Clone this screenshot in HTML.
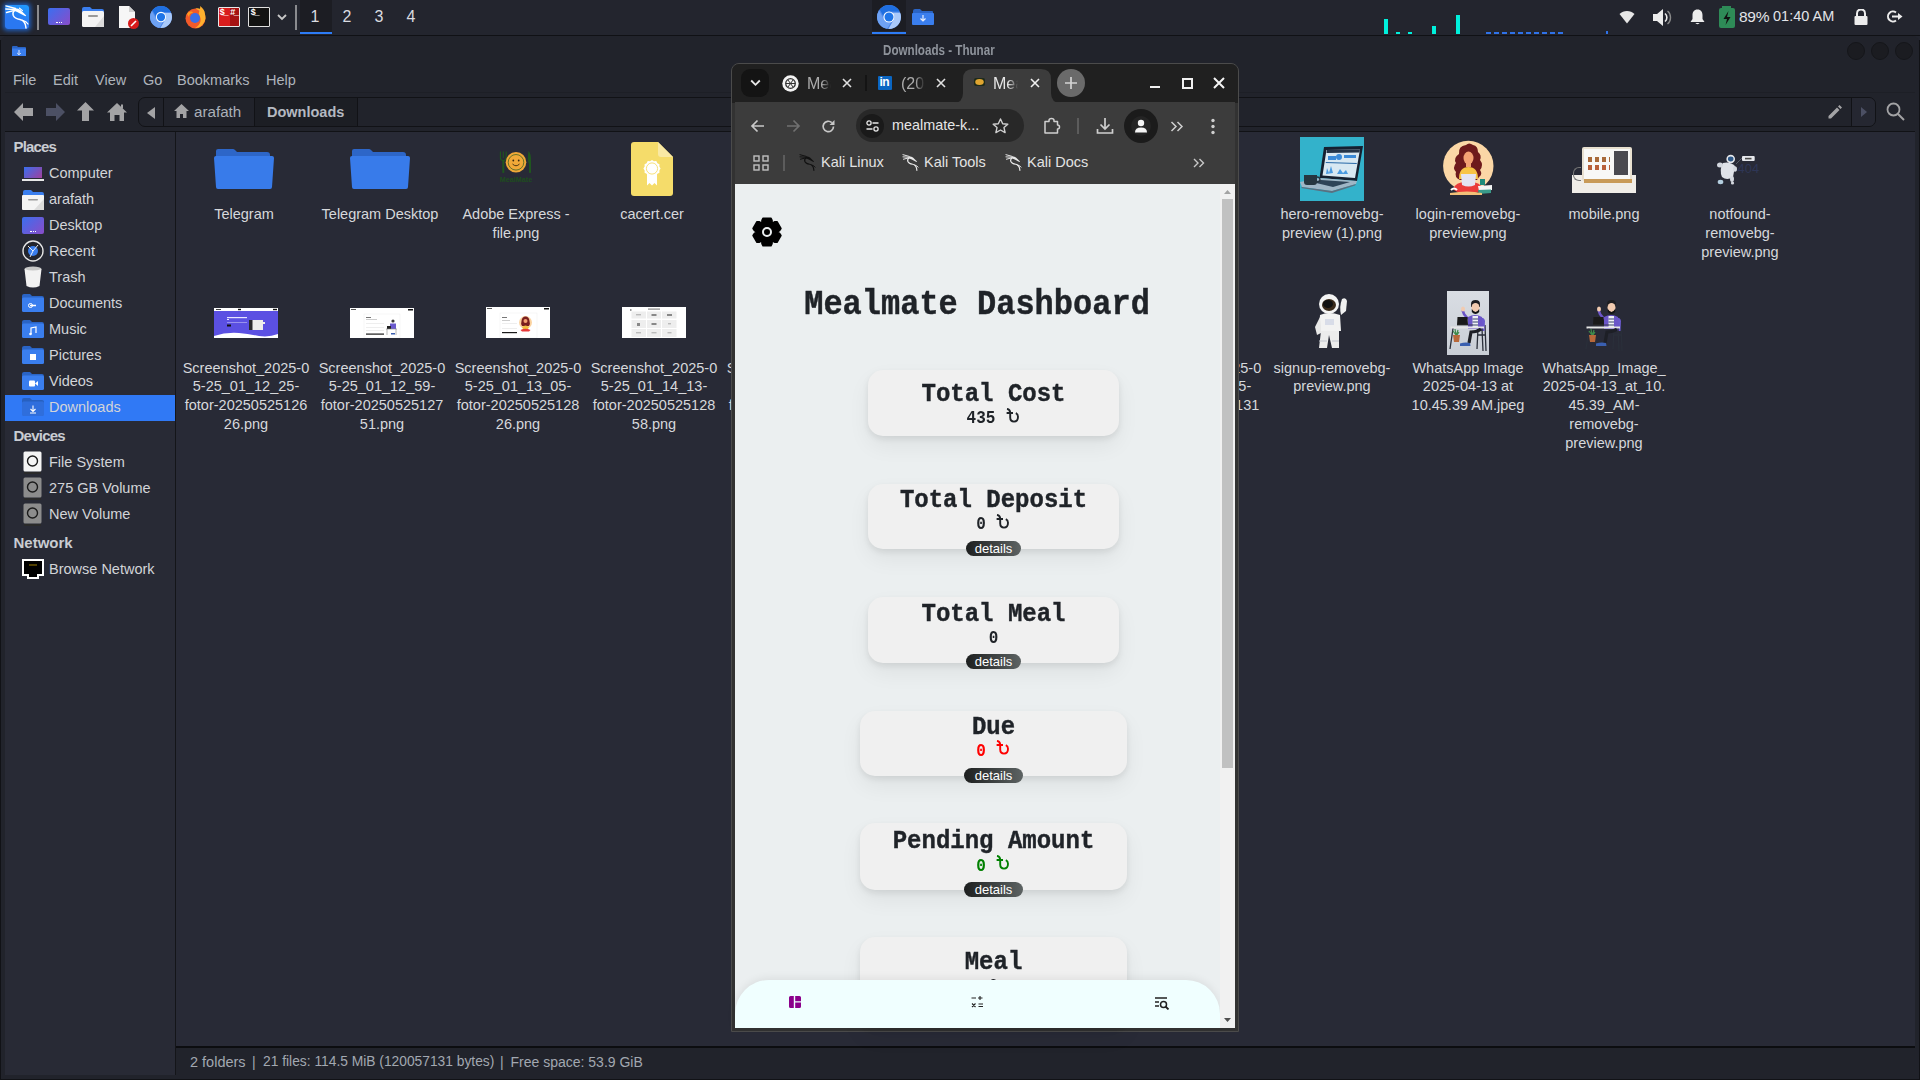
<!DOCTYPE html>
<html><head><meta charset="utf-8">
<style>
*{margin:0;padding:0;box-sizing:border-box}
html,body{width:1920px;height:1080px;overflow:hidden;background:#23252e;font-family:"Liberation Sans",sans-serif}
.a{position:absolute}
.t{position:absolute;white-space:nowrap;line-height:1}
#panel{left:0;top:0;width:1920px;height:36px;background:#23252e;border-bottom:1px solid #101115}
#thunar{left:0;top:36px;width:1920px;height:1044px;background:#21232b;border-radius:8px 8px 0 0;overflow:hidden}
.menu{font-size:14.5px;color:#aeb3bb;top:73px}
.side{font-size:14.5px;color:#d2d4d8}
.sidehd{font-size:13.5px;font-weight:bold;color:#c9ccd2}
.lbl{font-size:14.5px;color:#d6d8dc;text-align:center;width:136px;line-height:18.8px;white-space:normal}
.card{background:#f0f0f0;border-radius:15px;box-shadow:0 3px 6px rgba(0,0,0,.08),0 10px 22px rgba(0,0,0,.06)}
.mono{font-family:"Liberation Mono",monospace;font-weight:bold;-webkit-text-stroke:0.4px currentColor;transform:scaleY(1.1);transform-origin:50% 76.6%}
.det{height:15px;border-radius:8px;background:linear-gradient(90deg,#1d1f1f,#5d6363);color:#fff;font-size:13px;line-height:15px;text-align:center;font-family:"Liberation Sans",sans-serif}
</style></head><body>

<!-- TOP PANEL -->
<div id="panel" class="a"></div>
<!-- kali menu -->
<div class="a" style="left:5px;top:5px;width:24px;height:24px;border-radius:3px;background:linear-gradient(200deg,#1f9dff,#2a78f2 60%,#2a78f2);box-shadow:0 0 4px 1.5px rgba(30,120,255,.65)"></div>
<svg class="a" style="left:5px;top:5px" width="24" height="24" viewBox="0 0 24 24"><path d="M10.5 5.2 Q7 7 8.3 10.5 Q9.5 13.5 15 14.5 Q20.5 15.5 21 23" stroke="#fff" stroke-width="1.5" fill="none" stroke-linecap="round"/><path d="M17.5 15.3 Q21.5 16.5 23 19" stroke="#fff" stroke-width="1.2" fill="none" stroke-linecap="round"/><path d="M0.8 0.8 L10.5 3.5 M0.8 4 L10.5 4.6 M1.5 7.5 L10.5 5.2" stroke="#fff" stroke-width="1.3" fill="none" stroke-linecap="round"/><path d="M10 3.3 Q14 3.6 15.5 5 L21.2 10.6 L20.4 11.2 L14.5 8.2 Q12 6.8 10.2 6.3Z" fill="#fff"/><path d="M14.5 3.2 L17.5 5.6" stroke="#fff" stroke-width="1.1" stroke-linecap="round"/></svg>
<div class="a" style="left:37px;top:5px;width:2px;height:25px;background:#8a8b8f"></div>
<!-- desktop -->
<div class="a" style="left:48px;top:8px;width:22px;height:17px;border-radius:2px;background:linear-gradient(135deg,#3a6ff0,#8a4cc8)"></div>
<div class="a" style="left:56px;top:22px;width:6px;height:1px;border-top:1px dotted #fff"></div>
<!-- files -->
<svg class="a" style="left:81px;top:6px" width="24" height="22" viewBox="0 0 24 22"><path d="M1 3 Q1 1 3 1 H9 L11 3 H21 Q23 3 23 5 V8 H1Z" fill="#3a7eee"/><rect x="1" y="5" width="22" height="16" rx="1.5" fill="#f4f4f4"/><path d="M14 21 L23 10 V21Z" fill="#dcdcdc"/><rect x="7" y="9" width="10" height="2" rx="1" fill="#9a9a9a"/></svg>
<!-- text editor -->
<svg class="a" style="left:117px;top:5px" width="23" height="24" viewBox="0 0 23 24"><path d="M2 1 H12 L18 7 V23 H2Z" fill="#f6f6f6"/><path d="M12 1 L18 7 H12Z" fill="#d0d0d0"/><circle cx="16.5" cy="18.5" r="5.5" fill="#d81b1b"/><path d="M14 21 L19 16" stroke="#fff" stroke-width="1.6"/></svg>
<!-- chromium -->
<svg class="a" style="left:150px;top:6px" width="22" height="22" viewBox="0 0 24 24"><circle cx="12" cy="12" r="11.9" fill="#4d88ea"/><path d="M12 0C8.21 0 4.831 1.757 2.632 4.501l3.953 6.848A5.454 5.454 0 0 1 12 6.545h10.691A12 12 0 0 0 12 0z" fill="#1f6fe0"/><path d="M1.931 5.47A11.943 11.943 0 0 0 0 12c0 6.012 4.42 10.991 10.189 11.864l3.953-6.847a5.45 5.45 0 0 1-6.865-2.29z" fill="#6ea2f4"/><path d="M15.273 7.636a5.446 5.446 0 0 1 1.45 7.09l-5.344 9.258c.206.01.413.016.621.016 6.627 0 12-5.373 12-12 0-1.54-.29-3.011-.818-4.364z" fill="#a9c9fa"/><circle cx="12" cy="12" r="5.6" fill="#fff"/><circle cx="12" cy="12" r="4.5" fill="#1f75e8"/></svg>
<!-- firefox -->
<svg class="a" style="left:184px;top:5px" width="23" height="24" viewBox="0 0 23 24"><circle cx="11.5" cy="13.5" r="10" fill="#f25a2a"/><path d="M11.5 3.5 C16 2 22 6 21.5 13 C21 18 17 23 11 23 C17 20 18 14 15 10 C14 7 17 4 16 1 C19 3 21 6 21 9Z" fill="#ffb02e"/><circle cx="11" cy="13" r="5" fill="#3b6ee8"/><path d="M3 9 C5 6 8 6 9 8 C6 8 5 10 5 12Z" fill="#ff9a1e"/></svg>
<!-- root terminal -->
<div class="a" style="left:218px;top:7px;width:22px;height:20px;background:linear-gradient(90deg,#d91d1d 0 55%,#a51212 55%);border:1px solid #e8e8e8;border-radius:1px"></div>
<div class="t" style="left:219.5px;top:9px;font-size:9px;font-weight:bold;color:#fff;font-family:'Liberation Mono';letter-spacing:-1.6px">$_</div><div class="t" style="left:230px;top:9px;font-size:9px;font-weight:bold;color:#fff;font-family:'Liberation Mono';letter-spacing:-1.6px">#_</div>
<!-- terminal -->
<div class="a" style="left:248px;top:7px;width:22px;height:20px;background:#121212;border:1px solid #e0e0e0;border-radius:1px"></div>
<div class="t" style="left:250.5px;top:9px;font-size:9px;font-weight:bold;color:#fff;font-family:'Liberation Mono';letter-spacing:-1.6px">$_</div>
<svg class="a" style="left:277px;top:14px" width="10" height="7" viewBox="0 0 10 7"><path d="M1 1 L5 5 L9 1" stroke="#c8c8c8" stroke-width="1.8" fill="none"/></svg>
<div class="a" style="left:295px;top:5px;width:2px;height:25px;background:#8a8b8f"></div>
<!-- workspaces -->
<div class="a" style="left:300px;top:0;width:32px;height:34px;background:#1c1d23"></div>
<div class="a" style="left:300px;top:32px;width:32px;height:2px;background:#2d7cf6"></div>
<div class="t" style="left:310.5px;top:9.3px;font-size:16px;color:#dadce0">1</div>
<div class="t" style="left:342.5px;top:9.3px;font-size:16px;color:#dadce0">2</div>
<div class="t" style="left:374.5px;top:9.3px;font-size:16px;color:#dadce0">3</div>
<div class="t" style="left:406.5px;top:9.3px;font-size:16px;color:#dadce0">4</div>
<!-- task chromium -->
<div class="a" style="left:872px;top:0;width:34px;height:31px;background:#1c1d23"></div>
<div class="a" style="left:872px;top:32px;width:34px;height:2px;background:#2d7cf6"></div>
<svg class="a" style="left:877px;top:5px" width="24" height="24" viewBox="0 0 24 24"><circle cx="12" cy="12" r="11.9" fill="#4d88ea"/><path d="M12 0C8.21 0 4.831 1.757 2.632 4.501l3.953 6.848A5.454 5.454 0 0 1 12 6.545h10.691A12 12 0 0 0 12 0z" fill="#1f6fe0"/><path d="M1.931 5.47A11.943 11.943 0 0 0 0 12c0 6.012 4.42 10.991 10.189 11.864l3.953-6.847a5.45 5.45 0 0 1-6.865-2.29z" fill="#6ea2f4"/><path d="M15.273 7.636a5.446 5.446 0 0 1 1.45 7.09l-5.344 9.258c.206.01.413.016.621.016 6.627 0 12-5.373 12-12 0-1.54-.29-3.011-.818-4.364z" fill="#a9c9fa"/><circle cx="12" cy="12" r="5.6" fill="#fff"/><circle cx="12" cy="12" r="4.5" fill="#1f75e8"/></svg>
<svg class="a" style="left:912px;top:9px" width="22" height="16" viewBox="0 0 22 16"><path d="M1 2 Q1 0 3 0 H8 L10 2 H20 Q21 2 21 3 V16 H1Z" fill="#2a64c5"/><rect x="0" y="4" width="22" height="12" rx="1" fill="#3a7eee"/><path d="M11 6 V12 M8.5 9.5 L11 12 L13.5 9.5" stroke="#e8eefc" stroke-width="1.2" fill="none"/></svg>
<!-- cpu graph -->
<div class="a" style="left:1384px;top:19px;width:4px;height:15px;background:#00f0dc"></div>
<div class="a" style="left:1396px;top:32px;width:4px;height:2px;background:#00f0dc"></div>
<div class="a" style="left:1408px;top:32px;width:4px;height:2px;background:#00f0dc"></div>
<div class="a" style="left:1432px;top:26px;width:4px;height:8px;background:#00f0dc"></div>
<div class="a" style="left:1456px;top:15px;width:4px;height:19px;background:#00f0dc"></div>
<div class="a" style="left:1486px;top:32px;width:80px;height:2px;background:repeating-linear-gradient(90deg,#2f72e8 0 5px,transparent 5px 8px)"></div>
<div class="a" style="left:1606px;top:31px;width:2px;height:3px;background:#2f72e8"></div>
<!-- systray -->
<svg class="a" style="left:1619px;top:10px" width="16" height="14" viewBox="0 0 16 14"><path d="M8 13.5 L0.5 4 C4.5 0 11.5 0 15.5 4Z" fill="#e6e6e6"/></svg>
<svg class="a" style="left:1653px;top:9px" width="19" height="17" viewBox="0 0 19 17"><path d="M0 5 H4 L10 0 V17 L4 12 H0Z" fill="#ececec"/><path d="M12 4.5 C14.5 6.5 14.5 10.5 12 12.5" stroke="#ececec" stroke-width="1.6" fill="none"/><path d="M14.5 2 C18.5 5 18.5 12 14.5 15" stroke="#8a8a8a" stroke-width="1.4" fill="none"/></svg>
<svg class="a" style="left:1690px;top:9px" width="15" height="16" viewBox="0 0 15 16"><path d="M7.5 0.5 C11 0.5 12.5 3 12.5 6 V10 L14.5 13 H0.5 L2.5 10 V6 C2.5 3 4 0.5 7.5 0.5Z" fill="#ececec"/><path d="M5.5 14 H9.5 C9 15.5 6 15.5 5.5 14Z" fill="#ececec"/></svg>
<div class="a" style="left:1722px;top:6px;width:9px;height:2px;background:#2e8b57"></div>
<div class="a" style="left:1719px;top:8px;width:16px;height:20px;background:#2e8b57;border-radius:2px"></div>
<svg class="a" style="left:1719px;top:8px" width="16" height="20" viewBox="0 0 16 20"><path d="M9.5 3 L4.5 11 H8 L6.5 17 L11.5 9 H8Z" fill="#111"/></svg>
<div class="t" style="left:1739px;top:9px;font-size:15.5px;color:#e2e4e8;letter-spacing:-0.3px">89%</div>
<div class="t" style="left:1773px;top:9px;font-size:14.5px;color:#e2e4e8">01:40 AM</div>
<svg class="a" style="left:1854px;top:9px" width="14" height="16" viewBox="0 0 14 16"><path d="M3 7 V4.5 C3 1.5 5 0.5 7 0.5 C9 0.5 11 1.5 11 4.5 V7" stroke="#ececec" stroke-width="2" fill="none"/><rect x="0.5" y="7" width="13" height="9" rx="1" fill="#ececec"/></svg>
<svg class="a" style="left:1887px;top:10px" width="17" height="13" viewBox="0 0 17 13"><path d="M9 2.5 A5 5 0 1 0 9 10.5" stroke="#ececec" stroke-width="2" fill="none"/><path d="M5 6.5 H13" stroke="#ececec" stroke-width="2"/><path d="M11 3 L15.5 6.5 L11 10Z" fill="#ececec"/></svg>


<!-- THUNAR WINDOW -->
<div id="thunar" class="a"></div>
<!-- title bar -->
<svg class="a" style="left:12px;top:45.5px" width="14" height="10.5" viewBox="0 0 14 10.5"><path d="M0 1 Q0 0 1 0 H5 L6 1 H13 Q14 1 14 2 V10.5 H0Z" fill="#2a64c5"/><rect x="0" y="2.5" width="14" height="8" fill="#3a7eee"/><path d="M7 4 V8.5 M5.2 7 L7 8.8 L8.8 7" stroke="#dfe8fb" stroke-width="1" fill="none"/></svg>
<div class="t" style="left:883px;top:43px;font-size:14px;font-weight:bold;color:#8f949c;transform:scaleX(0.83);transform-origin:0 0">Downloads - Thunar</div>
<div class="a" style="left:1847px;top:42px;width:18px;height:18px;border-radius:50%;background:#1b1c21;border:1px solid #15161a"></div>
<div class="a" style="left:1871px;top:42px;width:18px;height:18px;border-radius:50%;background:#1b1c21;border:1px solid #15161a"></div>
<div class="a" style="left:1895px;top:42px;width:18px;height:18px;border-radius:50%;background:#1b1c21;border:1px solid #15161a"></div>
<!-- menu -->
<div class="t menu" style="left:13px">File</div>
<div class="t menu" style="left:53px">Edit</div>
<div class="t menu" style="left:95px">View</div>
<div class="t menu" style="left:143px">Go</div>
<div class="t menu" style="left:177px">Bookmarks</div>
<div class="t menu" style="left:266px">Help</div>
<div class="a" style="left:5px;top:92px;width:1910px;height:1px;background:#1d1f26"></div>
<!-- toolbar -->
<svg class="a" style="left:14px;top:103px" width="20" height="18" viewBox="0 0 20 18"><path d="M0 9 L9 0 V5 H19 V13 H9 V18Z" fill="#a3a3a5"/></svg>
<svg class="a" style="left:45px;top:103px" width="20" height="18" viewBox="0 0 20 18"><path d="M20 9 L11 0 V5 H1 V13 H11 V18Z" fill="#4c5064"/></svg>
<svg class="a" style="left:77px;top:102px" width="17" height="19" viewBox="0 0 17 19"><path d="M8.5 0 L17 8.5 H12 V19 H5 V8.5 H0Z" fill="#a3a3a5"/></svg>
<svg class="a" style="left:107px;top:103px" width="20" height="18" viewBox="0 0 20 18"><path d="M10 0 L20 9.5 H17 V18 H12.5 V12 H7.5 V18 H3 V9.5 H0Z" fill="#a3a3a5"/><rect x="14" y="1.5" width="2" height="4" fill="#a3a3a5"/></svg>
<!-- path bar -->
<div class="a" style="left:138px;top:97px;width:1738px;height:30px;border:1px solid #111216;border-radius:7px;background:#21232b"></div>
<div class="a" style="left:163px;top:98px;width:1px;height:28px;background:#111216"></div>
<div class="a" style="left:254px;top:98px;width:1px;height:28px;background:#111216"></div>
<div class="a" style="left:255px;top:98px;width:102px;height:28px;background:#1c1e24"></div>
<div class="a" style="left:357px;top:98px;width:1px;height:28px;background:#111216"></div>
<div class="a" style="left:1851px;top:98px;width:1px;height:28px;background:#111216"></div>
<div class="a" style="left:1852px;top:98px;width:23px;height:28px;background:#252731;border-radius:0 6px 6px 0"></div>
<svg class="a" style="left:147px;top:107px" width="8" height="12" viewBox="0 0 8 12"><path d="M8 0 V12 L0 6Z" fill="#a3a3a5"/></svg>
<svg class="a" style="left:174px;top:104px" width="15" height="14" viewBox="0 0 15 14"><path d="M7.5 0 L15 7 H12.5 V14 H9 V10 H6 V14 H2.5 V7 H0Z" fill="#a3a3a5"/></svg>
<div class="t" style="left:194px;top:104px;font-size:15.2px;color:#aab0b8">arafath</div>
<div class="t" style="left:267px;top:104.5px;font-size:14.5px;font-weight:bold;color:#b4b9c1">Downloads</div>
<svg class="a" style="left:1828px;top:105px" width="14" height="14" viewBox="0 0 14 14"><path d="M0.5 11 L9 2.5 L11.5 5 L3 13.5 L0.5 13.5Z M10 1.5 L11.5 0 L14 2.5 L12.5 4Z" fill="#a3a3a5"/></svg>
<svg class="a" style="left:1861px;top:107px" width="6" height="10" viewBox="0 0 6 10"><path d="M0 0 V10 L6 5Z" fill="#4c5064"/></svg>
<svg class="a" style="left:1886px;top:102px" width="20" height="20" viewBox="0 0 20 20"><circle cx="7.5" cy="7.5" r="6" stroke="#a3a3a5" stroke-width="1.8" fill="none"/><path d="M12 12 L18 18" stroke="#a3a3a5" stroke-width="2"/></svg>
<div class="a" style="left:5px;top:131px;width:1910px;height:1px;background:#111216"></div>
<!-- sidebar -->
<div class="a" style="left:5px;top:132px;width:170px;height:943px;background:#282a35"></div>
<div class="a" style="left:175px;top:132px;width:1px;height:943px;background:#141519"></div>

<div class="t sidehd" style="left:13.5px;top:139.3px;font-size:15px;letter-spacing:-0.85px">Places</div>
<div class="t sidehd" style="left:13.5px;top:428px;font-size:15px;letter-spacing:-0.76px">Devices</div>
<div class="t sidehd" style="left:13.5px;top:535.3px;font-size:15px">Network</div>
<div class="a" style="left:5px;top:395px;width:170px;height:26px;background:#3079f5"></div>
<div class="t side" style="left:49px;top:166px">Computer</div>
<div class="t side" style="left:49px;top:192px">arafath</div>
<div class="t side" style="left:49px;top:218px">Desktop</div>
<div class="t side" style="left:49px;top:244px">Recent</div>
<div class="t side" style="left:49px;top:270px">Trash</div>
<div class="t side" style="left:49px;top:296px">Documents</div>
<div class="t side" style="left:49px;top:322px">Music</div>
<div class="t side" style="left:49px;top:348px">Pictures</div>
<div class="t side" style="left:49px;top:374px">Videos</div>
<div class="t side" style="left:49px;top:400px">Downloads</div>
<div class="t side" style="left:49px;top:455px">File System</div>
<div class="t side" style="left:49px;top:481px">275 GB Volume</div>
<div class="t side" style="left:49px;top:507px">New Volume</div>
<div class="t side" style="left:49px;top:562px">Browse Network</div>

<div class="a" style="left:24px;top:167px;width:18px;height:11px;background:linear-gradient(135deg,#3a6ff0,#a0409c)"></div>
<div class="a" style="left:22px;top:179px;width:22px;height:2px;background:#e8e8e8"></div>
<svg class="a" style="left:22px;top:190px" width="22" height="20" viewBox="0 0 22 20"><path d="M1 2 Q1 0 3 0 H9 L11 2 H20 Q22 2 22 4 V8 H1Z" fill="#3a7eee"/><rect x="0" y="5" width="22" height="15" rx="1" fill="#f4f4f4"/><path d="M12 20 L22 9 V20Z" fill="#dcdcdc"/><rect x="6" y="9" width="10" height="1.6" rx="0.8" fill="#9a9a9a"/></svg>
<div class="a" style="left:22px;top:217px;width:22px;height:17px;border-radius:2px;background:linear-gradient(135deg,#3a6ff0,#8a4cc8)"></div>
<div class="a" style="left:30px;top:231px;width:6px;height:1px;border-top:1px dotted #fff"></div>
<svg class="a" style="left:22px;top:240px" width="22" height="22" viewBox="0 0 22 22"><circle cx="11" cy="11" r="10" fill="#23252e" stroke="#e6e6e6" stroke-width="1.4"/><circle cx="11" cy="11" r="5" fill="#3a7eee"/><path d="M6 6 L11 11 L16 5 M11 11 L8 17" stroke="#fff" stroke-width="0.9" fill="none"/></svg>
<svg class="a" style="left:24px;top:266px" width="18" height="22" viewBox="0 0 18 22"><ellipse cx="9" cy="3" rx="8.5" ry="2.5" fill="#c8c8c8"/><path d="M0.5 3 L2.5 20 Q9 23 15.5 20 L17.5 3 Q9 6 0.5 3Z" fill="#f2f2f2"/></svg>
<svg class="a" style="left:22px;top:294px" width="22" height="18" viewBox="0 0 22 18"><path d="M0 2 Q0 0 2 0 H8 L10 2 H20 Q22 2 22 4 V8 H0Z" fill="#2a64c5"/><rect x="0" y="3.5" width="22" height="14.5" rx="1.5" fill="#3a7eee"/><path d="M8 11.5 H14" stroke="#fff" stroke-width="1.5"/><circle cx="8.5" cy="11.5" r="2" stroke="#fff" stroke-width="1" fill="none"/></svg><svg class="a" style="left:22px;top:320px" width="22" height="18" viewBox="0 0 22 18"><path d="M0 2 Q0 0 2 0 H8 L10 2 H20 Q22 2 22 4 V8 H0Z" fill="#2a64c5"/><rect x="0" y="3.5" width="22" height="14.5" rx="1.5" fill="#3a7eee"/><path d="M9 14 V8 L14 7 V13" stroke="#fff" stroke-width="1.2" fill="none"/><circle cx="8.5" cy="14" r="1.3" fill="#fff"/></svg><svg class="a" style="left:22px;top:346px" width="22" height="18" viewBox="0 0 22 18"><path d="M0 2 Q0 0 2 0 H8 L10 2 H20 Q22 2 22 4 V8 H0Z" fill="#2a64c5"/><rect x="0" y="3.5" width="22" height="14.5" rx="1.5" fill="#3a7eee"/><rect x="8" y="8" width="6" height="6" fill="#fff"/></svg><svg class="a" style="left:22px;top:372px" width="22" height="18" viewBox="0 0 22 18"><path d="M0 2 Q0 0 2 0 H8 L10 2 H20 Q22 2 22 4 V8 H0Z" fill="#2a64c5"/><rect x="0" y="3.5" width="22" height="14.5" rx="1.5" fill="#3a7eee"/><rect x="7" y="8.5" width="6" height="6" rx="1" fill="#fff"/><path d="M13 11.5 L16 9 V14Z" fill="#fff"/></svg><svg class="a" style="left:22px;top:398px" width="22" height="18" viewBox="0 0 22 18"><path d="M0 2 Q0 0 2 0 H8 L10 2 H20 Q22 2 22 4 V8 H0Z" fill="#2760c0"/><rect x="0" y="3.5" width="22" height="14.5" rx="1.5" fill="#2f6edc"/><path d="M11 7.5 V13.5 M8.5 11 L11 13.5 L13.5 11" stroke="#fff" stroke-width="1.1" fill="none"/><path d="M8 15 H14" stroke="#fff" stroke-width="1"/></svg><svg class="a" style="left:23px;top:451px" width="19" height="23" viewBox="0 0 19 23"><rect x="0.5" y="0.5" width="18" height="20" rx="1.5" fill="#f4f4f4"/><circle cx="9.5" cy="10" r="5" stroke="#1a1a1a" stroke-width="1.4" fill="none"/><rect x="1" y="21" width="17" height="2" fill="#2a2a2a"/></svg>
<svg class="a" style="left:23px;top:477px" width="19" height="23" viewBox="0 0 19 23"><rect x="0.5" y="0.5" width="18" height="20" rx="1.5" fill="#8c8c8c"/><circle cx="9.5" cy="10" r="5" stroke="#1a1a1a" stroke-width="1.4" fill="none"/><rect x="1" y="21" width="17" height="2" fill="#2a2a2a"/></svg>
<svg class="a" style="left:23px;top:503px" width="19" height="23" viewBox="0 0 19 23"><rect x="0.5" y="0.5" width="18" height="20" rx="1.5" fill="#8c8c8c"/><circle cx="9.5" cy="10" r="5" stroke="#1a1a1a" stroke-width="1.4" fill="none"/><rect x="1" y="21" width="17" height="2" fill="#2a2a2a"/></svg>
<svg class="a" style="left:22px;top:559px" width="22" height="20" viewBox="0 0 22 20"><path d="M1 1 H21 V16 H16 V19 H6 V16 H1Z" fill="#000" stroke="#fff" stroke-width="2"/><path d="M8 5 V7 M10 5 V7 M12 5 V7 M14 5 V7" stroke="#c9a000" stroke-width="0.8"/></svg>
<!-- content -->
<div class="a" style="left:176px;top:132px;width:1739px;height:914px;background:#282a36"></div>
<!-- grid -->
<div class="a lbl" style="left:176px;top:205.4px">Telegram</div>
<div class="a lbl" style="left:312px;top:205.4px">Telegram Desktop</div>
<div class="a lbl" style="left:448px;top:205.4px">Adobe Express -<br>file.png</div>
<div class="a lbl" style="left:584px;top:205.4px">cacert.cer</div>
<div class="a lbl" style="left:1264px;top:205.4px">hero-removebg-<br>preview (1).png</div>
<div class="a lbl" style="left:1400px;top:205.4px">login-removebg-<br>preview.png</div>
<div class="a lbl" style="left:1536px;top:205.4px">mobile.png</div>
<div class="a lbl" style="left:1672px;top:205.4px">notfound-<br>removebg-<br>preview.png</div>
<div class="a lbl" style="left:178px;top:358.5px">Screenshot_2025-0<br>5-25_01_12_25-<br>fotor-20250525126<br>26.png</div>
<div class="a lbl" style="left:314px;top:358.5px">Screenshot_2025-0<br>5-25_01_12_59-<br>fotor-20250525127<br>51.png</div>
<div class="a lbl" style="left:450px;top:358.5px">Screenshot_2025-0<br>5-25_01_13_05-<br>fotor-20250525128<br>26.png</div>
<div class="a lbl" style="left:586px;top:358.5px">Screenshot_2025-0<br>5-25_01_14_13-<br>fotor-20250525128<br>58.png</div>
<div class="a lbl" style="left:722px;top:358.5px">Screenshot_2025-0<br>5-25_01_14_45-<br>fotor-20250525129<br>16.png</div>
<div class="a lbl" style="left:1130px;top:358.5px">Screenshot_2025-0<br>5-25_01_15_45-<br>fotor-20250525131<br>05.png</div>
<div class="a lbl" style="left:1264px;top:358.5px">signup-removebg-<br>preview.png</div>
<div class="a lbl" style="left:1400px;top:358.5px">WhatsApp Image<br>2025-04-13 at<br>10.45.39 AM.jpeg</div>
<div class="a lbl" style="left:1536px;top:358.5px">WhatsApp_Image_<br>2025-04-13_at_10.<br>45.39_AM-<br>removebg-<br>preview.png</div>
<svg class="a" style="left:214px;top:148px" width="60" height="42" viewBox="0 0 60 42"><path d="M2 3 Q2 1 4 1 H19 Q20 1 21 2 L23 4 H53 Q56 4 56 7 V12 H2Z" fill="#2d66c8"/><path d="M0 10 Q0 8 2 8 H58 Q60 8 60 10 L58 39 Q58 41 56 41 H4 Q2 41 2 39Z" fill="#387bea"/></svg>
<svg class="a" style="left:350px;top:148px" width="60" height="42" viewBox="0 0 60 42"><path d="M2 3 Q2 1 4 1 H19 Q20 1 21 2 L23 4 H53 Q56 4 56 7 V12 H2Z" fill="#2d66c8"/><path d="M0 10 Q0 8 2 8 H58 Q60 8 60 10 L58 39 Q58 41 56 41 H4 Q2 41 2 39Z" fill="#387bea"/></svg>
<svg class="a" style="left:497px;top:148px" width="38" height="38" viewBox="0 0 38 38"><path d="M3.4 3.5 V10 Q3.4 12.5 6.3 12.5 Q9.2 12.5 9.2 10 V3.5 M6.3 3.5 V10" stroke="#1f561f" stroke-width="1.1" fill="none"/><path d="M5.3 12 H7.3 V24.5 Q6.3 25.5 5.3 24.5Z" fill="#1f561f"/>
<path d="M31.5 3 Q34.5 6 34 14 V24.5 Q33 25.5 32 24.5 V16 Q30 12 31.5 3Z" fill="#1f561f"/>
<circle cx="19" cy="14.3" r="10.3" fill="#f0a838"/><circle cx="19" cy="14.3" r="7.8" fill="none" stroke="#2a5a20" stroke-width="0.7"/><circle cx="16.3" cy="12.5" r="0.9" fill="#3a2a10"/><circle cx="21.7" cy="12.5" r="0.9" fill="#3a2a10"/><path d="M15.5 16 Q19 19.5 22.5 16" stroke="#3a2a10" stroke-width="0.9" fill="none"/>
<text x="19" y="33.8" font-family="Liberation Sans" font-size="7.6" font-weight="bold" fill="#1e4d1e" text-anchor="middle" textLength="32.5" lengthAdjust="spacingAndGlyphs">MealMate</text></svg>
<svg class="a" style="left:631px;top:142px" width="42" height="54" viewBox="0 0 42 54"><path d="M3 0 H27 L42 15 V51 Q42 54 39 54 H3 Q0 54 0 51 V3 Q0 0 3 0Z" fill="#f5dc6a"/><path d="M27 0 L42 15 H30 Q27 15 27 12Z" fill="#f9e9a4"/>
<path d="M16 31 V43.5 L18.5 41 L21 43.5 L23.5 41 L26 43.5 V31Z" fill="#fff"/><path d="M21.00 17.90 L22.97 19.16 L25.30 19.05 L26.37 21.13 L28.45 22.20 L28.34 24.53 L29.60 26.50 L28.34 28.47 L28.45 30.80 L26.37 31.87 L25.30 33.95 L22.97 33.84 L21.00 35.10 L19.03 33.84 L16.70 33.95 L15.63 31.87 L13.55 30.80 L13.66 28.47 L12.40 26.50 L13.66 24.53 L13.55 22.20 L15.63 21.13 L16.70 19.05 L19.03 19.16Z" fill="#fff"/><circle cx="21" cy="26.5" r="5.6" fill="none" stroke="#f5dc6a" stroke-width="0.9"/></svg>
<svg class="a" style="left:214px;top:308px" width="64" height="30" viewBox="0 0 64 30"><rect width="64" height="30" fill="#5b50e2"/><rect width="64" height="3" fill="#fff"/><rect x="24" y="0.8" width="3" height="1.4" fill="#111"/><rect x="59" y="0.8" width="4" height="1.4" fill="#111"/><rect x="2" y="1" width="5" height="1" fill="#444"/>
<path d="M0 30 V28 Q12 24 25 25 Q35 26 45 28 Q55 29.5 64 26 V30Z" fill="#fff"/>
<rect x="13" y="9" width="20" height="1.2" fill="#e8e6ff"/><rect x="13" y="11" width="2" height="1" fill="#e8e6ff"/><rect x="13" y="14" width="20" height="0.8" fill="#a8a2f0"/><rect x="13" y="16.5" width="4" height="2" fill="#111"/>
<rect x="35" y="12" width="14" height="10" fill="#eeeeea"/><rect x="35" y="12" width="3.5" height="10" fill="#2a2a2a"/><rect x="48" y="14" width="3" height="2" fill="#eee"/></svg>
<svg class="a" style="left:350px;top:308px" width="64" height="30" viewBox="0 0 64 30"><rect width="64" height="30" fill="#fff"/><rect x="1" y="1" width="5" height="1" fill="#555"/><rect x="58" y="1" width="5" height="1.5" fill="#111"/><rect x="14" y="6" width="36" height="24" fill="none" stroke="#f0f0f0" stroke-width="0.6"/><rect x="16" y="9" width="5" height="0.8" fill="#555"/><rect x="16" y="11" width="11" height="0.6" fill="#aaa"/><rect x="16" y="15" width="18" height="0.5" fill="#ddd"/><rect x="16" y="19" width="18" height="0.5" fill="#ddd"/><rect x="16" y="22.5" width="18" height="0.5" fill="#ddd"/><rect x="16" y="25.5" width="18" height="1.2" fill="#1a1a1a"/>
<circle cx="43" cy="13" r="1.6" fill="#3a3a3a"/><path d="M40 15.5 H46 V21 H40Z" fill="#6a5acd"/><rect x="37" y="18" width="4" height="3" fill="#222"/><path d="M36 21 H47 M37 21 L37 27 M46 21 L46 27" stroke="#888" stroke-width="0.6"/><rect x="41" y="25" width="4" height="1.5" fill="#3a5fb0"/></svg>
<svg class="a" style="left:486px;top:307px" width="64" height="31" viewBox="0 0 64 31"><rect width="64" height="31" fill="#fff"/><rect x="1" y="1" width="5" height="1" fill="#555"/><rect x="58" y="1" width="5" height="1.5" fill="#111"/><rect x="14" y="6" width="37" height="25" fill="none" stroke="#f0f0f0" stroke-width="0.6"/><rect x="16" y="10" width="5" height="0.8" fill="#555"/><rect x="16" y="13" width="8" height="0.6" fill="#aaa"/><rect x="16" y="16.5" width="15" height="0.5" fill="#ddd"/><rect x="16" y="21" width="15" height="0.5" fill="#ddd"/><rect x="16" y="25" width="15" height="1.2" fill="#1a1a1a"/>
<circle cx="39.5" cy="15.5" r="6.5" fill="#fbd3a0"/><path d="M35.5 14 Q36 9.5 39.5 9.5 Q43 9.5 43.5 14 Q44.5 17 43 19 H36 Q34.5 17 35.5 14Z" fill="#7a1e1e"/><circle cx="39.5" cy="14" r="2" fill="#f4a070"/><path d="M36 20 Q39.5 17 43 20 L42 22 H37Z" fill="#f2c040"/><path d="M34.5 23 Q39.5 20.5 44.5 23 L43 24.5 H36Z" fill="#e83a3a"/></svg>
<svg class="a" style="left:622px;top:307px" width="64" height="31" viewBox="0 0 64 31"><rect width="64" height="31" fill="#fff"/><rect x="26" y="1.5" width="12" height="1.2" fill="#888"/><rect x="8" y="2.5" width="1.5" height="1" fill="#333"/>
<g fill="#eeeeee"><rect x="9.5" y="4.5" width="14.5" height="7"/><rect x="25" y="4.5" width="14" height="7"/><rect x="40" y="4.5" width="14.5" height="7"/><rect x="9.5" y="13" width="14.5" height="8"/><rect x="25" y="13" width="14" height="8"/><rect x="40" y="13" width="14.5" height="8"/><rect x="9.5" y="22" width="14.5" height="8"/><rect x="25" y="22" width="14" height="8"/><rect x="40" y="22" width="14.5" height="8"/></g>
<g fill="#888"><rect x="14" y="7.5" width="5" height="0.7"/><rect x="29.5" y="7" width="5" height="2"/><rect x="45" y="7" width="5" height="2"/><rect x="15" y="16" width="3" height="3"/><rect x="29.5" y="16" width="5" height="2"/><rect x="46" y="16.5" width="3" height="0.7"/><rect x="14" y="25.5" width="5" height="0.7"/><rect x="29.5" y="25.5" width="5" height="0.7"/><rect x="45.5" y="25.5" width="4" height="0.7"/></g></svg>
<svg class="a" style="left:1300px;top:137px" width="64" height="64" viewBox="0 0 64 64"><rect width="64" height="64" fill="#33b2cb"/>
<path d="M24 10 L63 9 L57 44 L19.5 41Z" fill="#152030"/>
<path d="M26.5 13 L60 12.5 L55 41 L22.5 38.5Z" fill="#d8e8f2"/>
<path d="M27 13 L60 12.5 L59.5 15.5 L26.5 16Z" fill="#243448"/>
<path d="M28 19 H36 V23 H28Z M39 17 A3 3 0 1 1 39 23 A3 3 0 1 1 39 17Z M44 18 H56 V21 H44Z" fill="#3a8ad8"/>
<path d="M26 25 L57 26 L56.5 27 L25.5 26Z" fill="#2a6aa8"/>
<path d="M26 37 L27 31 L29 36 L31 29 L33 36Z M37 37 L40 32 L43 36 L46 33 L48 37Z" fill="#4a9ae0"/>
<path d="M0 45 L20 41 L57 44 L56 47 L32 54 L2 50Z" fill="#9fb6c6"/>
<path d="M12 45 L21 43 L50 45 L33 50Z" fill="#2e4458"/>
<path d="M2 50 L32 54 L56 47 L55 48.5 L32 56 L1 51Z" fill="#5a7080"/>
<path d="M4 38 H17 V45 Q17 48 14 48 H7 Q4 48 4 45Z" fill="#263640"/><path d="M17 40 Q20 40 20 43 Q20 45 17 45" stroke="#263640" stroke-width="1.3" fill="none"/>
</svg>
<svg class="a" style="left:1442px;top:140px" width="52" height="58" viewBox="0 0 52 58"><circle cx="26.3" cy="26" r="25.2" fill="#fbd7a6"/>
<path d="M17 14 Q16 6 24 5 Q27 2 31 5 Q36 6 36 12 Q40 15 38 20 Q42 25 38 30 Q41 34 37 37 L35 40 H18 Q12 37 14 32 Q10 28 14 23 Q11 18 17 14Z" fill="#6e1a1c"/>
<ellipse cx="26.5" cy="18" rx="5" ry="6.5" fill="#f4a274"/>
<path d="M24 22 H29 V27 H24Z" fill="#f4a274"/>
<path d="M17 39 Q17 27 26.5 27 Q36 27 36 39Z" fill="#f8c446"/>
<path d="M11 49 Q14 41 26 42 Q38 41 41 49 Q36 54 26 53 Q15 54 11 49Z" fill="#ea3c3a"/>
<path d="M19 34 H34 L33 45 Q26.5 48 20 45Z" fill="#e4e4f2"/>
<path d="M38 39 H43 V45 H38Z" fill="#1e8a7a"/>
<path d="M36 46 L50 45 V50 L37 51Z" fill="#f4f4f4"/><path d="M36 50 L49 49.5 V53 L37 54Z" fill="#3a9a8a"/>
<path d="M8 53 Q26 50 40 53 V55 H8Z" fill="#f2c078"/>
<path d="M9 50 Q12 47 15 50" stroke="#fff" stroke-width="2" fill="none"/>
</svg>
<div class="a" style="left:1572px;top:145px;width:64px;height:48px;overflow:hidden">
<div class="a" style="left:0;top:30px;width:64px;height:18px;background:#f0ede8"></div>
<div class="a" style="left:10px;top:2px;width:50px;height:34px;background:#f8f8f6;border:2px solid #e8e0d0;border-radius:2px"></div>
<div class="a" style="left:12px;top:34px;width:48px;height:4px;background:#c89a58"></div>
<div class="a" style="left:42px;top:6px;width:14px;height:24px;background:#4a4a50"></div>
<div class="a" style="left:16px;top:12px;width:22px;height:5px;background:repeating-linear-gradient(90deg,#a86a3a 0 4px,transparent 4px 7px)"></div>
<div class="a" style="left:16px;top:20px;width:22px;height:5px;background:repeating-linear-gradient(90deg,#b8603a 0 4px,transparent 4px 7px)"></div>
<div class="a" style="left:1px;top:22px;width:8px;height:14px;border:1px solid #777;border-right:none;border-radius:6px 0 0 6px"></div>
</div>
<svg class="a" style="left:1712px;top:152px" width="52" height="40" viewBox="0 0 52 40"><text x="25.5" y="20.8" font-family="Liberation Sans" font-size="12.8" fill="#2e3656" textLength="21.5">404</text>
<path d="M24 12 Q28 8 30 6" stroke="#8a8f9a" stroke-width="0.5" fill="none"/>
<circle cx="18.7" cy="7" r="4.3" fill="#e8eaee"/><ellipse cx="18.7" cy="7" rx="2.8" ry="2.4" fill="#2f5a8a"/>
<path d="M11 11 Q18 9 23 14 L21 25 Q15 29 10 25 Q7 18 11 11Z" fill="#dfe2e8"/>
<ellipse cx="8" cy="13" rx="3" ry="2.5" fill="#d4d8df"/><ellipse cx="23" cy="17" rx="2" ry="2.8" fill="#d4d8df"/>
<ellipse cx="8.5" cy="30" rx="2.8" ry="2.2" fill="#b4cfe0"/><ellipse cx="20" cy="27" rx="2" ry="3" fill="#d4d8df"/><ellipse cx="20.5" cy="31" rx="1.6" ry="1.6" fill="#d4d8df"/>
<rect x="30" y="4" width="12.7" height="5" rx="1" fill="#e6e8ec"/><rect x="33" y="5.8" width="6.5" height="1.6" fill="#4a4a4a"/></svg>
<svg class="a" style="left:1313px;top:293px" width="38" height="59" viewBox="0 0 38 59"><circle cx="16" cy="11" r="10" fill="#f4f4f4"/><ellipse cx="16" cy="12" rx="7" ry="6" fill="#3a2a1a"/><ellipse cx="15" cy="11" rx="5" ry="4" fill="#111"/><path d="M29 6 Q33 4 34 8 L33 18 L28 22 Q26 14 29 6Z" fill="#f0f0f0"/><path d="M7 22 Q16 18 27 22 L28 38 H6Z" fill="#f2f2f2"/><path d="M7 24 L2 34 L4 42 L8 40 L8 32Z" fill="#e8e8e8"/><path d="M8 38 L6 55 H14 L16 42 L19 55 H26 L26 38Z" fill="#ececec"/><rect x="12" y="26" width="9" height="6" fill="#d8dce8"/><path d="M6 48 H14 M19 48 H26" stroke="#c0c4cc" stroke-width="1"/></svg>
<div class="a" style="left:1447px;top:291px;width:42px;height:64px;background:linear-gradient(#d9dde3,#c9ced6)"></div>
<svg class="a" style="left:1447px;top:291px" width="42" height="64" viewBox="0 0 42 64"><path d="M38 34 L39 60 M31 37 L30 58 M31 44 H39" stroke="#2a2f3a" stroke-width="1.3" fill="none"/>
<path d="M33.5 27 Q37 26 38 30 L37.5 40 H34Z" fill="#6a5acd"/>
<path d="M24 13 Q24 9 28.5 9 Q33 9 33 13 V16 H24Z" fill="#1e1e22"/>
<ellipse cx="28.5" cy="16.5" rx="4" ry="4.5" fill="#f2cbb0"/>
<path d="M24.8 18 Q28.5 24 32.2 18 V21 Q28.5 25 24.8 21Z" fill="#141414"/>
<path d="M21 26 Q28 22 35 26 L36 38 H21Z" fill="#6b55c8"/>
<path d="M25.5 25 H31 V36 H25.5Z" fill="#f0f0f5"/><path d="M25.5 28 H31 M25.5 31 H31 M25.5 34 H31" stroke="#35406a" stroke-width="1"/>
<path d="M21 28 L17 23 L15.5 19" stroke="#6b55c8" stroke-width="2.5" fill="none"/>
<ellipse cx="16" cy="18" rx="2" ry="2.5" fill="#f2cbb0"/>
<path d="M10.5 26 H20.5 L21 34 H10Z" fill="#1a1a1a"/><path d="M10 34 H26" stroke="#333" stroke-width="0.8"/>
<path d="M3.5 35.5 H37 V37.5 H3.5Z" fill="#e6e6e6"/>
<path d="M6 37.5 L3 58 M35 37.5 L36 60" stroke="#2a2f3a" stroke-width="1.3" fill="none"/>
<path d="M34 38 Q30 41 24 41 L22 52" stroke="#1d1f26" stroke-width="3.2" fill="none"/>
<path d="M13 52.5 Q18 51 23 52 L23.5 55 H13Z" fill="#3a5fb0"/>
<path d="M8 38 L9 44 M6 40 L9 44 M11 39 L9.5 44 M12 41 L10 44" stroke="#3f8a4a" stroke-width="1.2"/>
<path d="M6 44 H13 L12 51 H7Z" fill="#b8683a"/></svg>

<svg class="a" style="left:1583px;top:291px" width="48" height="64" viewBox="0 0 48 64"><path d="M38 34 L39 60 M31 37 L30 58 M31 44 H39" stroke="#2a2f3a" stroke-width="1.3" fill="none"/>
<path d="M33.5 27 Q37 26 38 30 L37.5 40 H34Z" fill="#6a5acd"/>
<path d="M24 13 Q24 9 28.5 9 Q33 9 33 13 V16 H24Z" fill="#1e1e22"/>
<ellipse cx="28.5" cy="16.5" rx="4" ry="4.5" fill="#f2cbb0"/>
<path d="M24.8 18 Q28.5 24 32.2 18 V21 Q28.5 25 24.8 21Z" fill="#141414"/>
<path d="M21 26 Q28 22 35 26 L36 38 H21Z" fill="#6b55c8"/>
<path d="M25.5 25 H31 V36 H25.5Z" fill="#f0f0f5"/><path d="M25.5 28 H31 M25.5 31 H31 M25.5 34 H31" stroke="#35406a" stroke-width="1"/>
<path d="M21 28 L17 23 L15.5 19" stroke="#6b55c8" stroke-width="2.5" fill="none"/>
<ellipse cx="16" cy="18" rx="2" ry="2.5" fill="#f2cbb0"/>
<path d="M10.5 26 H20.5 L21 34 H10Z" fill="#1a1a1a"/><path d="M10 34 H26" stroke="#333" stroke-width="0.8"/>
<path d="M3.5 35.5 H37 V37.5 H3.5Z" fill="#e6e6e6"/>
<path d="M6 37.5 L3 58 M35 37.5 L36 60" stroke="#2a2f3a" stroke-width="1.3" fill="none"/>
<path d="M34 38 Q30 41 24 41 L22 52" stroke="#1d1f26" stroke-width="3.2" fill="none"/>
<path d="M13 52.5 Q18 51 23 52 L23.5 55 H13Z" fill="#3a5fb0"/>
<path d="M8 38 L9 44 M6 40 L9 44 M11 39 L9.5 44 M12 41 L10 44" stroke="#3f8a4a" stroke-width="1.2"/>
<path d="M6 44 H13 L12 51 H7Z" fill="#b8683a"/></svg>
<!-- status bar -->
<div class="a" style="left:176px;top:1046px;width:1739px;height:2px;background:#0c0d10"></div>
<div class="t" style="left:190px;top:1055px;font-size:14.5px;color:#a2a8b1">2 folders</div>
<div class="t" style="left:252px;top:1055px;font-size:14px;color:#a2a8b1">|</div>
<div class="t" style="left:263px;top:1055px;font-size:13.8px;color:#a2a8b1">21 files: 114.5 MiB (120057131 bytes)</div>
<div class="t" style="left:500px;top:1055px;font-size:14px;color:#a2a8b1">|</div>
<div class="t" style="left:510.5px;top:1055px;font-size:14px;color:#a2a8b1">Free space: 53.9 GiB</div>


<div class="a" style="left:0;top:40px;width:1px;height:1040px;background:#111216"></div>
<div class="a" style="left:0;top:1079px;width:1920px;height:1px;background:#111216"></div>
<div class="a" style="left:1919px;top:40px;width:1px;height:1040px;background:#111216"></div>
<!-- CHROME WINDOW -->
<div class="a" style="left:731px;top:63px;width:508px;height:969px;background:#323232;border:1px solid #4b4b4b;border-radius:8px 8px 0 0"></div>
<div class="a" style="left:732px;top:64px;width:506px;height:39px;background:#202020;border-radius:7px 7px 0 0"></div>
<div class="a" style="left:735px;top:102px;width:500px;height:82px;background:#3c3c3c"></div>
<!-- tab strip -->
<div class="a" style="left:741px;top:69px;width:28px;height:28px;border-radius:9px;background:#141414"></div>
<svg class="a" style="left:750px;top:79px" width="11" height="8" viewBox="0 0 11 8"><path d="M1.2 1.5 L5.5 5.8 L9.8 1.5" stroke="#e8e8e8" stroke-width="1.8" fill="none"/></svg>
<svg class="a" style="left:782px;top:75px" width="17" height="17" viewBox="0 0 17 17"><circle cx="8.5" cy="8.5" r="8.2" fill="#f4f4f4"/><circle cx="8.5" cy="8.5" r="4.8" stroke="#333" stroke-width="1.3" fill="none"/><path d="M6 5 L11 12 M11 5 L6 12 M4 8.5 H13" stroke="#333" stroke-width="1" fill="none"/></svg>
<div class="t" style="left:807px;top:75.8px;font-size:16px;color:#ababab;width:24px;overflow:hidden;-webkit-mask-image:linear-gradient(90deg,#000 60%,transparent)">Meal</div>
<svg class="a" style="left:842px;top:78px" width="10" height="10" viewBox="0 0 10 10"><path d="M1 1 L9 9 M9 1 L1 9" stroke="#e0e0e0" stroke-width="1.6"/></svg>
<div class="a" style="left:865px;top:75px;width:2px;height:16px;background:#141414"></div>
<div class="a" style="left:878px;top:76px;width:14px;height:14px;background:#0a66c2;border-radius:1px"></div>
<div class="t" style="left:879.5px;top:76px;font-size:12px;font-weight:bold;color:#fff;letter-spacing:-0.5px">in</div>
<div class="t" style="left:901px;top:75.8px;font-size:16px;color:#ababab;width:24px;overflow:hidden;-webkit-mask-image:linear-gradient(90deg,#000 60%,transparent)">(20)</div>
<svg class="a" style="left:936px;top:78px" width="10" height="10" viewBox="0 0 10 10"><path d="M1 1 L9 9 M9 1 L1 9" stroke="#e0e0e0" stroke-width="1.6"/></svg>
<!-- active tab -->
<svg class="a" style="left:953px;top:69px" width="108" height="34" viewBox="0 0 108 34"><path d="M0 34 Q10 34 10 24 V10 Q10 0 20 0 H88 Q98 0 98 10 V24 Q98 34 108 34Z" fill="#3c3c3c"/></svg>
<svg class="a" style="left:973px;top:77px" width="13" height="10" viewBox="0 0 13 10"><rect x="1" y="1" width="11" height="8" rx="2" fill="#1e2a1a"/><ellipse cx="6.5" cy="5" rx="4.3" ry="2.9" fill="#e0a530"/></svg>
<div class="t" style="left:993px;top:75.8px;font-size:16px;color:#e6e6e6;width:25px;overflow:hidden;-webkit-mask-image:linear-gradient(90deg,#000 60%,transparent)">Meal</div>
<svg class="a" style="left:1030px;top:78px" width="10" height="10" viewBox="0 0 10 10"><path d="M1 1 L9 9 M9 1 L1 9" stroke="#f0f0f0" stroke-width="1.6"/></svg>
<div class="a" style="left:1057px;top:69px;width:28px;height:28px;border-radius:50%;background:#6a6a6a"></div>
<svg class="a" style="left:1064px;top:76px" width="14" height="14" viewBox="0 0 14 14"><path d="M7 1 V13 M1 7 H13" stroke="#d4d4d4" stroke-width="1.7"/></svg>
<div class="a" style="left:1150px;top:86px;width:10px;height:2px;background:#f0f0f0"></div>
<div class="a" style="left:1182px;top:77.5px;width:11px;height:11px;border:2px solid #f0f0f0"></div>
<svg class="a" style="left:1213px;top:77px" width="12" height="12" viewBox="0 0 12 12"><path d="M1 1 L11 11 M11 1 L1 11" stroke="#f4f4f4" stroke-width="2"/></svg>
<!-- toolbar -->
<svg class="a" style="left:750px;top:119px" width="15" height="14" viewBox="0 0 15 14"><path d="M14 7 H2 M7.5 1.5 L2 7 L7.5 12.5" stroke="#c8c8c8" stroke-width="1.7" fill="none"/></svg>
<svg class="a" style="left:786px;top:119px" width="15" height="14" viewBox="0 0 15 14"><path d="M1 7 H13 M7.5 1.5 L13 7 L7.5 12.5" stroke="#707070" stroke-width="1.7" fill="none"/></svg>
<svg class="a" style="left:821px;top:119px" width="15" height="15" viewBox="0 0 15 15"><path d="M12.5 7.5 A5.2 5.2 0 1 1 10.8 3.6" stroke="#c8c8c8" stroke-width="1.7" fill="none"/><path d="M13.5 1 V6 H8.5Z" fill="#c8c8c8"/></svg>
<div class="a" style="left:856px;top:109px;width:168px;height:33px;border-radius:17px;background:#282828"></div>
<div class="a" style="left:860px;top:114px;width:24px;height:24px;border-radius:50%;background:#1a1a1a"></div>
<svg class="a" style="left:866px;top:120px" width="13" height="12" viewBox="0 0 13 12"><circle cx="3" cy="3" r="2.1" stroke="#e6e6e6" stroke-width="1.3" fill="none"/><path d="M6.5 3 H12.5 M0.5 9 H6.5" stroke="#e6e6e6" stroke-width="1.3"/><circle cx="10" cy="9" r="2.1" stroke="#e6e6e6" stroke-width="1.3" fill="none"/></svg>
<div class="t" style="left:892px;top:118px;font-size:14.4px;color:#e6e6e6">mealmate-k...</div>
<svg class="a" style="left:992px;top:118px" width="17" height="16" viewBox="0 0 17 16"><path d="M8.5 1 L10.7 5.7 L15.8 6.2 L12 9.6 L13.1 14.6 L8.5 12 L3.9 14.6 L5 9.6 L1.2 6.2 L6.3 5.7Z" stroke="#cfcfcf" stroke-width="1.4" fill="none" stroke-linejoin="round"/></svg>
<svg class="a" style="left:1043px;top:117px" width="18" height="18" viewBox="0 0 18 18"><path d="M2 4.5 H6 V3.5 Q6 1.5 8.5 1.5 Q11 1.5 11 3.5 V4.5 H14.5 V8 Q16.5 8 16.5 10 Q16.5 12 14.5 12 V16 H2Z" stroke="#cfcfcf" stroke-width="1.5" fill="none" stroke-linejoin="round"/></svg>
<div class="a" style="left:1077px;top:118px;width:2px;height:16px;background:#5c5c5c"></div>
<svg class="a" style="left:1096px;top:117px" width="18" height="18" viewBox="0 0 18 18"><path d="M9 1 V12 M4.5 7.5 L9 12 L13.5 7.5 M1.5 12 V16 H16.5 V12" stroke="#cfcfcf" stroke-width="1.7" fill="none"/></svg>
<div class="a" style="left:1124px;top:109px;width:34px;height:34px;border-radius:50%;background:#1b1b1b"></div>
<div class="a" style="left:1131px;top:116px;width:20px;height:20px;border-radius:50%;background:#242424"></div>
<svg class="a" style="left:1134px;top:119px" width="14" height="14" viewBox="0 0 14 14"><circle cx="7" cy="4" r="3.2" fill="#f4f4f4"/><path d="M1 13.5 Q1 8.5 7 8.5 Q13 8.5 13 13.5Z" fill="#f4f4f4"/></svg>
<svg class="a" style="left:1170px;top:121px" width="14" height="11" viewBox="0 0 14 11"><path d="M1.5 1 L6 5.5 L1.5 10 M7.5 1 L12 5.5 L7.5 10" stroke="#cfcfcf" stroke-width="1.5" fill="none"/></svg>
<svg class="a" style="left:1210px;top:118px" width="6" height="17" viewBox="0 0 6 17"><circle cx="3" cy="2.5" r="1.7" fill="#cfcfcf"/><circle cx="3" cy="8.5" r="1.7" fill="#cfcfcf"/><circle cx="3" cy="14.5" r="1.7" fill="#cfcfcf"/></svg>
<!-- bookmarks -->
<svg class="a" style="left:753px;top:155px" width="16" height="16" viewBox="0 0 16 16"><rect x="1" y="1" width="5" height="5" stroke="#c0c0c0" stroke-width="1.4" fill="none"/><rect x="10" y="1" width="5" height="5" stroke="#c0c0c0" stroke-width="1.4" fill="none"/><rect x="1" y="10" width="5" height="5" stroke="#c0c0c0" stroke-width="1.4" fill="none"/><rect x="10" y="10" width="5" height="5" stroke="#c0c0c0" stroke-width="1.4" fill="none"/></svg>
<div class="a" style="left:783px;top:155px;width:2px;height:16px;background:#5c5c5c"></div>
<svg class="a" style="left:799px;top:154px" width="17" height="17" viewBox="0 0 24 24"><path d="M10.5 5.2 Q7 7 8.3 10.5 Q9.5 13.5 15 14.5 Q20.5 15.5 21 23" stroke="#111" stroke-width="1.7" fill="none" stroke-linecap="round"/><path d="M17.5 15.3 Q21.5 16.5 23 19" stroke="#111" stroke-width="1.4" fill="none"/><path d="M0.8 0.8 L10.5 3.5 M0.8 4 L10.5 4.6 M1.5 7.5 L10.5 5.2" stroke="#111" stroke-width="1.4" fill="none"/><path d="M10 3.3 Q14 3.6 15.5 5 L21.2 10.6 L20.4 11.2 L14.5 8.2 Q12 6.8 10.2 6.3Z" fill="#111"/></svg>
<svg class="a" style="left:902px;top:154px" width="17" height="17" viewBox="0 0 24 24"><path d="M10.5 5.2 Q7 7 8.3 10.5 Q9.5 13.5 15 14.5 Q20.5 15.5 21 23" stroke="#e8e8e8" stroke-width="1.7" fill="none" stroke-linecap="round"/><path d="M17.5 15.3 Q21.5 16.5 23 19" stroke="#e8e8e8" stroke-width="1.4" fill="none"/><path d="M0.8 0.8 L10.5 3.5 M0.8 4 L10.5 4.6 M1.5 7.5 L10.5 5.2" stroke="#e8e8e8" stroke-width="1.4" fill="none"/><path d="M10 3.3 Q14 3.6 15.5 5 L21.2 10.6 L20.4 11.2 L14.5 8.2 Q12 6.8 10.2 6.3Z" fill="#e8e8e8"/></svg>
<svg class="a" style="left:1005px;top:154px" width="17" height="17" viewBox="0 0 24 24"><path d="M10.5 5.2 Q7 7 8.3 10.5 Q9.5 13.5 15 14.5 Q20.5 15.5 21 23" stroke="#e8e8e8" stroke-width="1.7" fill="none" stroke-linecap="round"/><path d="M17.5 15.3 Q21.5 16.5 23 19" stroke="#e8e8e8" stroke-width="1.4" fill="none"/><path d="M0.8 0.8 L10.5 3.5 M0.8 4 L10.5 4.6 M1.5 7.5 L10.5 5.2" stroke="#e8e8e8" stroke-width="1.4" fill="none"/><path d="M10 3.3 Q14 3.6 15.5 5 L21.2 10.6 L20.4 11.2 L14.5 8.2 Q12 6.8 10.2 6.3Z" fill="#e8e8e8"/></svg>
<div class="t" style="left:821px;top:155px;font-size:14.5px;color:#e3e3e3">Kali Linux</div>
<div class="t" style="left:924px;top:155px;font-size:14.5px;color:#e3e3e3">Kali Tools</div>
<div class="t" style="left:1027px;top:155px;font-size:14.5px;color:#e3e3e3">Kali Docs</div>
<svg class="a" style="left:1193px;top:158px" width="12" height="10" viewBox="0 0 12 10"><path d="M1 1 L5 5 L1 9 M6.5 1 L10.5 5 L6.5 9" stroke="#c8c8c8" stroke-width="1.4" fill="none"/></svg>
<!-- content -->
<div class="a" style="left:735px;top:184px;width:500px;height:844px;background:#ebeff0;overflow:hidden"></div>
<svg class="a" style="left:752px;top:217px" width="30" height="30" viewBox="0 0 30 30"><path d="M10.00 3.40 L11.10 1.20 L18.90 1.20 L20.00 3.40 L20.10 6.17 L22.55 4.87 L25.00 4.72 L28.90 11.48 L27.55 13.53 L25.20 15.00 L27.55 16.47 L28.90 18.52 L25.00 25.28 L22.55 25.13 L20.10 23.83 L20.00 26.60 L18.90 28.80 L11.10 28.80 L10.00 26.60 L9.90 23.83 L7.45 25.13 L5.00 25.28 L1.10 18.52 L2.45 16.47 L4.80 15.00 L2.45 13.53 L1.10 11.48 L5.00 4.72 L7.45 4.87 L9.90 6.17Z" fill="#000" stroke="#000" stroke-width="1.6" stroke-linejoin="round"/><circle cx="15" cy="15" r="4" stroke="#ebeff0" stroke-width="2" fill="#000"/></svg>
<div class="t mono" style="left:777px;width:400px;text-align:center;top:289.5px;font-size:32px;color:#1f2328">Mealmate Dashboard</div>
<div class="a card" style="left:868px;top:370px;width:251px;height:66px"></div>
<div class="t mono" style="left:793.5px;width:400px;text-align:center;top:382.6px;font-size:24px;color:#1f2328">Total Cost</div>
<div class="t mono" style="left:781px;width:400px;text-align:center;top:411.2px;font-size:16px;-webkit-text-stroke:0;color:#1f2328">435</div>
<svg class="a" style="left:1006px;top:408px" width="14" height="15" viewBox="0 0 14 15"><path d="M1 0.9 Q4 1.4 4.2 4.6 V9.6 Q4.2 13.6 8 13.6 Q12 13.6 12 8.8 Q12 6.2 9.8 5.2 M0.6 5 H7" stroke="#1f2328" stroke-width="1.9" fill="none"/></svg><div class="a card" style="left:868px;top:484px;width:251px;height:65px"></div>
<div class="t mono" style="left:793.5px;width:400px;text-align:center;top:488.6px;font-size:24px;color:#1f2328">Total Deposit</div>
<div class="t mono" style="left:781px;width:400px;text-align:center;top:517.0px;font-size:16px;-webkit-text-stroke:0;color:#1f2328">0</div>
<svg class="a" style="left:996px;top:514px" width="14" height="15" viewBox="0 0 14 15"><path d="M1 0.9 Q4 1.4 4.2 4.6 V9.6 Q4.2 13.6 8 13.6 Q12 13.6 12 8.8 Q12 6.2 9.8 5.2 M0.6 5 H7" stroke="#1f2328" stroke-width="1.9" fill="none"/></svg><div class="a det" style="left:966px;top:541px;width:55px">details</div>
<div class="a card" style="left:868px;top:597px;width:251px;height:66px"></div>
<div class="t mono" style="left:793.5px;width:400px;text-align:center;top:603.1px;font-size:24px;color:#1f2328">Total Meal</div>
<div class="t mono" style="left:793.5px;width:400px;text-align:center;top:630.5px;font-size:16px;-webkit-text-stroke:0;color:#1f2328">0</div>
<div class="a det" style="left:966px;top:654px;width:55px">details</div>
<div class="a card" style="left:860px;top:711px;width:267px;height:65px"></div>
<div class="t mono" style="left:793.5px;width:400px;text-align:center;top:715.6px;font-size:24px;color:#1f2328">Due</div>
<div class="t mono" style="left:781px;width:400px;text-align:center;top:743.5px;font-size:16px;-webkit-text-stroke:0;color:#ff0000">0</div>
<svg class="a" style="left:996px;top:740px" width="14" height="15" viewBox="0 0 14 15"><path d="M1 0.9 Q4 1.4 4.2 4.6 V9.6 Q4.2 13.6 8 13.6 Q12 13.6 12 8.8 Q12 6.2 9.8 5.2 M0.6 5 H7" stroke="#ff0000" stroke-width="1.9" fill="none"/></svg><div class="a det" style="left:964px;top:768px;width:59px">details</div>
<div class="a card" style="left:860px;top:823px;width:267px;height:67px"></div>
<div class="t mono" style="left:793.5px;width:400px;text-align:center;top:830.1px;font-size:24px;color:#1f2328">Pending Amount</div>
<div class="t mono" style="left:781px;width:400px;text-align:center;top:858.5px;font-size:16px;-webkit-text-stroke:0;color:#008000">0</div>
<svg class="a" style="left:996px;top:855px" width="14" height="15" viewBox="0 0 14 15"><path d="M1 0.9 Q4 1.4 4.2 4.6 V9.6 Q4.2 13.6 8 13.6 Q12 13.6 12 8.8 Q12 6.2 9.8 5.2 M0.6 5 H7" stroke="#008000" stroke-width="1.9" fill="none"/></svg><div class="a det" style="left:964px;top:882px;width:59px">details</div>
<div class="a card" style="left:860px;top:937px;width:267px;height:90px"></div>
<div class="t mono" style="left:793.5px;width:400px;text-align:center;top:950.6px;font-size:24px;color:#1f2328">Meal</div>
<div class="t mono" style="left:793.5px;width:400px;text-align:center;top:978.5px;font-size:16px;-webkit-text-stroke:0;color:#1f2328">0</div>
<!-- bottom nav -->
<div class="a" style="left:735px;top:980px;width:485px;height:48px;background:#f0ffff;border-radius:34px 34px 0 0;box-shadow:0 -2px 8px rgba(0,0,0,.07)"></div>
<svg class="a" style="left:789px;top:996px" width="12" height="12" viewBox="0 0 12 12"><path d="M0 1.5 Q0 0 1.5 0 H4.8 V12 H1.5 Q0 12 0 10.5Z M6.2 0 H10.5 Q12 0 12 1.5 V5.2 H6.2Z M6.2 6.6 H12 V10.5 Q12 12 10.5 12 H6.2Z" fill="#8b008b"/></svg>
<svg class="a" style="left:971px;top:996px" width="13" height="12" viewBox="0 0 13 12"><path d="M0.5 2 H5 M9 0 V4 M7 2 H11.5 M7.5 8 H12 M7.5 10.5 H12 M1 7.5 L4.5 11 M4.5 7.5 L1 11" stroke="#222" stroke-width="1.1"/></svg>
<svg class="a" style="left:1155px;top:997px" width="15" height="13" viewBox="0 0 15 13"><path d="M0 1 H12 M0 5 H4 M0 9 H4" stroke="#222" stroke-width="1.4"/><circle cx="8.5" cy="7.5" r="3" stroke="#222" stroke-width="1.5" fill="none"/><path d="M10.5 9.5 L13.5 12.5" stroke="#222" stroke-width="1.8"/></svg>
<!-- scrollbar -->
<div class="a" style="left:1220px;top:184px;width:15px;height:844px;background:#f1f1f1"></div>
<div class="a" style="left:1222px;top:199px;width:11px;height:569px;background:#c1c1c1"></div>
<svg class="a" style="left:1224px;top:190px" width="7" height="4" viewBox="0 0 7 4"><path d="M0 4 L3.5 0 L7 4Z" fill="#a3a3a3"/></svg>
<svg class="a" style="left:1224px;top:1018px" width="7" height="4" viewBox="0 0 7 4"><path d="M0 0 L3.5 4 L7 0Z" fill="#505050"/></svg>
</body></html>
